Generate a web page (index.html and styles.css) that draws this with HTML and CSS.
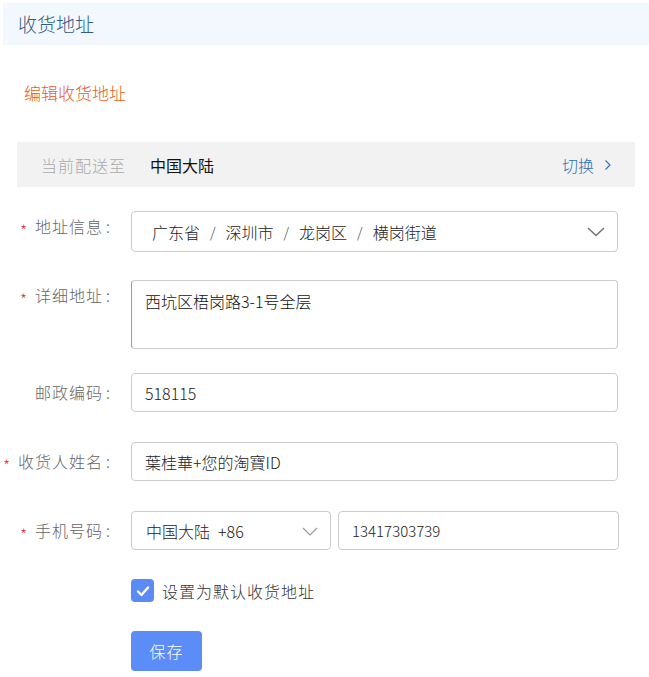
FILE: index.html
```html
<!DOCTYPE html>
<html lang="zh-CN">
<head>
<meta charset="utf-8">
<title>收货地址</title>
<link rel="stylesheet" href="styles.css">
</head>
<body>
<div class="page">
  <header class="hd"><h1 class="hd-title">收货地址</h1></header>
  <div class="sub">编辑收货地址</div>
  <div class="ship">
    <div class="ship-left"><span class="ship-label">当前配送至</span><span class="ship-value">中国大陆</span></div>
    <a class="ship-switch" href="#">切换<span class="ship-arrow"><svg width="8" height="12" viewBox="0 0 8 12"><path d="M1.5 1.5 L6 6 L1.5 10.5" fill="none" stroke="#2a6fb5" stroke-width="1.1"/></svg></span></a>
  </div>
  <form class="form">
    <div class="row row-1">
      <label class="lbl lbl-top"><span class="req">*</span>地址信息<span class="colon">:</span></label>
      <div class="field select">
        <span class="region">广东省</span><span class="sep">/</span><span class="region">深圳市</span><span class="sep">/</span><span class="region">龙岗区</span><span class="sep">/</span><span class="region">横岗街道</span>
        <svg class="chev" width="18" height="10" viewBox="0 0 18 10"><path d="M1 1 L9 8.5 L17 1" fill="none" stroke="#777" stroke-width="1.6"/></svg>
      </div>
    </div>
    <div class="row row-2">
      <label class="lbl lbl-top"><span class="req">*</span>详细地址<span class="colon">:</span></label>
      <textarea class="field area">西坑区梧岗路3-1号全层</textarea>
    </div>
    <div class="row row-3">
      <label class="lbl">邮政编码<span class="colon">:</span></label>
      <input class="field input" type="text" value="518115">
    </div>
    <div class="row row-4">
      <label class="lbl"><span class="req">*</span>收货人姓名<span class="colon">:</span></label>
      <input class="field input" type="text" value="葉桂華+您的淘寶ID">
    </div>
    <div class="row row-5">
      <label class="lbl"><span class="req">*</span>手机号码<span class="colon">:</span></label>
      <div class="phone">
        <div class="field code">
          <span class="code-name">中国大陆</span><span class="code-num">+86</span>
          <svg class="chev2" width="16" height="9" viewBox="0 0 16 9"><path d="M1 1 L8 8 L15 1" fill="none" stroke="#999" stroke-width="1.2"/></svg>
        </div>
        <input class="field input tel" type="text" value="13417303739">
      </div>
    </div>
    <div class="check-row">
      <span class="check"><svg width="14" height="12" viewBox="0 0 14 12"><path d="M2 6.5 L5.5 10 L12 2.5" fill="none" stroke="#fff" stroke-width="2.4" stroke-linecap="round" stroke-linejoin="round"/></svg></span>
      <span class="check-label">设置为默认收货地址</span>
    </div>
    <div class="btn-row"><button class="btn" type="button">保存</button></div>
  </form>
</div>
</body>
</html>
```

FILE: styles.css
```css
* { box-sizing: border-box; }
html, body { margin: 0; padding: 0; background: #fff; }
body {
  font-family: "Noto Sans CJK SC", "Noto Sans", sans-serif;
  font-weight: 300;
  color: #333;
  width: 649px;
}
.page { padding-top: 3px; }
.hd {
  margin-left: 3px;
  height: 42px;
  background: #f3f8fe;
  padding-left: 15px;
  display: flex;
  align-items: center;
}
.hd-title {
  margin: 0;
  font-size: 19px;
  font-weight: 300;
  line-height: 24px;
  color: #2f5b86;
}
.sub {
  margin-top: 36px;
  padding-left: 24px;
  font-size: 17px;
  line-height: 24px;
  color: #e0621f;
}
.ship {
  margin: 37px 0 0 17px;
  width: 618px;
  height: 45px;
  background: #f2f2f2;
  display: flex;
  align-items: center;
  justify-content: space-between;
  padding: 0 23px 0 24px;
  font-size: 16px;
}
.ship-label { color: #aaa; letter-spacing: 1px; }
.ship-value { color: #111; margin-left: 24px; font-weight: 400; }
.ship-switch {
  color: #2a6fb5;
  text-decoration: none;
  display: flex;
  align-items: center;
}
.ship-arrow { margin-left: 10px; display: flex; }
.form { margin-top: 24px; }
.row { display: flex; align-items: flex-start; }
.row-2 { margin-top: 28px; }
.row-3 { margin-top: 24px; }
.row-4, .row-5 { margin-top: 30px; }
.lbl {
  width: 111px;
  height: 39px;
  margin-right: 20px;
  text-align: right;
  font-size: 16px;
  line-height: 39px;
  color: #666;
  white-space: nowrap;
  letter-spacing: 1px;
}
.lbl-top { line-height: 30px; height: 30px; }
.req {
  color: #e4393c;
  font-size: 16px;
  margin-right: 7px;
  vertical-align: -4px;
}
.colon { margin-left: 3px; }
.field {
  border: 1px solid #ccc;
  border-radius: 4px;
  background: #fff;
  font-family: "Noto Sans CJK SC", "Noto Sans", sans-serif;
  font-weight: 300;
  color: #222;
  margin: 0;
  outline: none;
}
.select {
  width: 487px;
  height: 41px;
  display: flex;
  align-items: center;
  padding-left: 20px;
  font-size: 16px;
  position: relative;
}
.sep { margin: 0 10px; color: #444; font-size: 14px; }
.chev { position: absolute; right: 12px; top: 15px; }
.area {
  width: 487px;
  height: 69px;
  padding: 9px 13px;
  font-size: 16px;
  line-height: 22px;
  resize: none;
  border-left-color: #999;
  display: block;
  color: #111;
}
.input {
  width: 487px;
  height: 39px;
  padding: 0 13px;
  font-size: 16px;
  display: block;
}
.phone { display: flex; gap: 7px; }
.code {
  width: 200px;
  height: 39px;
  display: flex;
  align-items: center;
  padding-left: 14px;
  font-size: 16px;
  position: relative;
}
.code-num { margin-left: 8px; }
.chev2 { position: absolute; right: 12px; top: 15px; }
.tel { width: 281px; font-size: 15px; }
.check-row {
  margin: 29px 0 0 131px;
  display: flex;
  align-items: center;
  height: 23px;
}
.check {
  width: 23px;
  height: 23px;
  border-radius: 4px;
  background: #5a8bf5;
  display: flex;
  align-items: center;
  justify-content: center;
}
.check-label {
  margin-left: 8px;
  font-size: 16px;
  letter-spacing: 1px;
  color: #333;
}
.btn-row { margin: 29px 0 0 131px; }
.btn {
  display: block;
  width: 71px;
  height: 40px;
  border: none;
  border-radius: 4px;
  background: #5b8cf7;
  color: #fff;
  font-family: "Noto Sans CJK SC", "Noto Sans", sans-serif;
  font-weight: 300;
  font-size: 16px;
  padding: 0;
  letter-spacing: 1px;
}
```
